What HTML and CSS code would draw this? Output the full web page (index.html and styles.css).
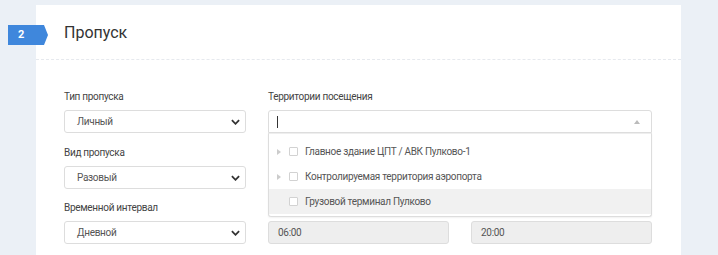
FILE: index.html
```html
<!DOCTYPE html>
<html lang="ru">
<head>
<meta charset="utf-8">
<link rel="stylesheet" href="styles.css">
</head>
<body>
<div class="page">
  <section class="card">
    <header class="card-head">
      <span class="step">2</span>
      <h2 class="title">Пропуск</h2>
    </header>
    <div class="card-body">
      <div class="form-grid">
        <label class="lbl c1 r1">Тип пропуска</label>
        <div class="select c1 r2"><span>Личный</span><svg class="chev" viewBox="0 0 10 6" width="9" height="6"><path d="M1 1l4 4 4-4" fill="none" stroke="#333" stroke-width="2"/></svg></div>
        <label class="lbl c1 r3">Вид пропуска</label>
        <div class="select c1 r4"><span>Разовый</span><svg class="chev" viewBox="0 0 10 6" width="9" height="6"><path d="M1 1l4 4 4-4" fill="none" stroke="#333" stroke-width="2"/></svg></div>
        <label class="lbl c1 r5">Временной интервал</label>
        <div class="select c1 r6"><span>Дневной</span><svg class="chev" viewBox="0 0 10 6" width="9" height="6"><path d="M1 1l4 4 4-4" fill="none" stroke="#333" stroke-width="2"/></svg></div>

        <label class="lbl c23 r1">Территории посещения</label>
        <div class="multi c23 r2">
          <div class="multi-input"><span class="caret"></span><span class="up"></span></div>
          <ul class="tree">
            <li class="node"><span class="tri"></span><span class="box"></span><span class="txt">Главное здание ЦПТ / АВК Пулково-1</span></li>
            <li class="node"><span class="tri"></span><span class="box"></span><span class="txt">Контролируемая территория аэропорта</span></li>
            <li class="node hl"><span class="tri none"></span><span class="box"></span><span class="txt">Грузовой терминал Пулково</span></li>
          </ul>
        </div>
        <div class="time c2 r6">06:00</div>
        <div class="time c3 r6">20:00</div>
      </div>
    </div>
  </section>
</div>
</body>
</html>
```
FILE: styles.css
```css
* { box-sizing: border-box; }
html, body { margin: 0; padding: 0; }
body {
  width: 718px;
  height: 255px;
  overflow: hidden;
  background: #ebf0f6;
  font-family: Roboto, "Noto Sans", sans-serif;
  color: #555;
}
.page {
  padding: 5px 37px 0 36px;
}
.card {
  position: relative;
  background: #fff;
  height: 250px;
}
.card-head {
  height: 55px;
  border-bottom: 1px dashed #e6e9ee;
  display: flex;
  align-items: center;
  padding-left: 28px;
}
.step {
  position: absolute;
  left: -28px;
  top: 20px;
  width: 40px;
  height: 20px;
  background: #3f87dc;
  color: #fff;
  font-weight: 700;
  font-size: 11px;
  line-height: 20px;
  padding-left: 10px;
  clip-path: polygon(0 0, 36px 0, 40px 50%, 36px 100%, 0 100%);
}
.title {
  margin: 0;
  font-size: 16px;
  font-weight: 400;
  color: #333;
}
.card-body {
  padding: 17px 29px 0 28px;
}
.form-grid {
  display: grid;
  grid-template-columns: 182px 181px 181px;
  column-gap: 22px;
  grid-template-rows: 33px 23px 33px 23px 32px 23px;
}
.c1 { grid-column: 1; }
.c2 { grid-column: 2; }
.c3 { grid-column: 3; }
.c23 { grid-column: 2 / 4; }
.r1 { grid-row: 1; }
.r2 { grid-row: 2; }
.r3 { grid-row: 3; }
.r4 { grid-row: 4; }
.r5 { grid-row: 5; }
.r6 { grid-row: 6; }
.lbl, .select, .time, .node {
  font-size: 10px;
  letter-spacing: -0.3px;
}
.lbl {
  line-height: 14px;
  color: #444;
  align-self: end;
  padding-bottom: 6px;
}
.select, .time {
  border: 1px solid #ddd;
  border-radius: 3px;
  color: #555;
  display: flex;
  align-items: center;
}
.select {
  justify-content: space-between;
  padding: 0 5px 0 12px;
  background: #fff;
}
.chev { display: block; }
.time {
  background: #eee;
  padding-left: 9px;
}
.multi {
  position: relative;
  z-index: 2;
}
.multi-input {
  height: 23px;
  border: 1px solid #ddd;
  border-radius: 3px 3px 0 0;
  background: #fff;
  display: flex;
  align-items: center;
  justify-content: space-between;
  padding: 0 11px 0 8px;
}
.caret {
  width: 1px;
  height: 12px;
  background: #333;
}
.up {
  width: 0;
  height: 0;
  border-left: 3.5px solid transparent;
  border-right: 3.5px solid transparent;
  border-bottom: 4px solid #bbb;
}
.tree {
  list-style: none;
  margin: 0;
  padding: 5px 0 2px;
  background: #fff;
  border: 1px solid #ddd;
  border-top: 1px solid #eee;
  border-radius: 0 0 3px 3px;
  box-shadow: 0 1px 2px rgba(0,0,0,0.06);
}
.node {
  height: 25px;
  display: flex;
  align-items: center;
  padding-left: 8px;
  color: #555;
}
.node.hl { background: #f1f1f1; }
.tri {
  width: 0;
  height: 0;
  border-top: 3px solid transparent;
  border-bottom: 3px solid transparent;
  border-left: 4px solid #ccc;
  margin-right: 8px;
}
.tri.none { border-left-color: transparent; }
.box {
  width: 9px;
  height: 9px;
  border: 1px solid #d2d2d2;
  border-radius: 1px;
  background: #fff;
  margin-right: 7px;
}
```
